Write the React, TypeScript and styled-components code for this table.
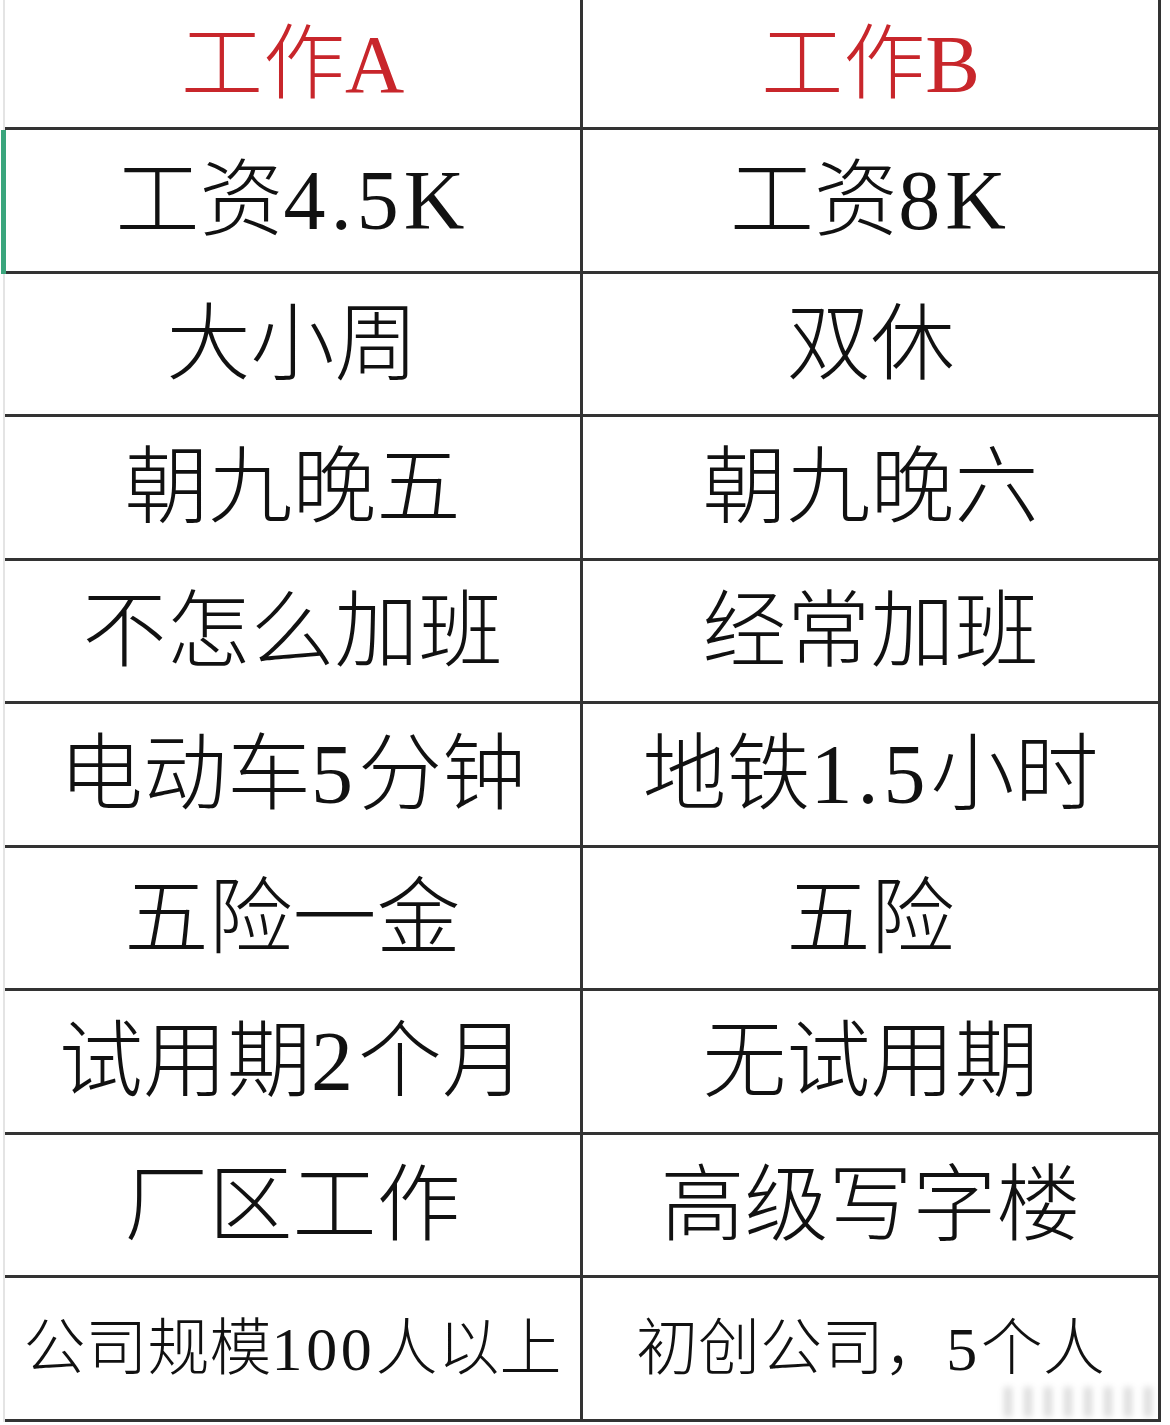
import styled, { createGlobalStyle } from "styled-components";

const GlobalStyle = createGlobalStyle`
  html, body {
    margin: 0;
    padding: 0;
    background: #fff;
  }
  body {
    width: 1170px;
    height: 1425px;
    overflow: hidden;
  }
`;

const Sheet = styled.div`
  position: relative;
  width: 1170px;
  height: 1425px;
  box-sizing: border-box;
  padding-left: 3px;
  background: #fff;
`;

const Table = styled.div`
  display: grid;
  grid-template-columns: 578px 578px;
  grid-template-rows: 130px repeat(9, 143.5px);
  width: max-content;
  border-left: 2px solid #e4e4e4;
`;

const Cell = styled.div<{ $head?: boolean; $small?: boolean; $selected?: boolean }>`
  position: relative;
  display: flex;
  align-items: center;
  justify-content: center;
  box-sizing: border-box;
  border-right: 3px solid #333;
  border-bottom: 3px solid #333;
  padding-top: 2px;
  font-family: "Liberation Serif", "Noto Sans CJK SC", serif;
  font-weight: 300;
  font-size: ${p => (p.$small ? 62 : p.$head ? 82 : 84)}px;
  color: ${p => (p.$head ? "#c8262b" : "#111")};
  white-space: nowrap;
  line-height: 1;

  ${p =>
    p.$selected &&
    `
    &::before {
      content: "";
      position: absolute;
      left: -4px;
      top: 0;
      bottom: -3px;
      width: 5px;
      background: #3aa57c;
    }
  `}
`;

const Latin = styled.span`
  letter-spacing: 0.06em;
`;

const Watermark = styled.div`
  position: absolute;
  right: 16px;
  bottom: 8px;
  width: 150px;
  height: 30px;
  opacity: 0.25;
  filter: blur(3px);
  background: repeating-linear-gradient(
    90deg,
    #777 0 8px,
    transparent 8px 20px
  );
`;

const rows: [string, string][] = [
  ["工资4.5K", "工资8K"],
  ["大小周", "双休"],
  ["朝九晚五", "朝九晚六"],
  ["不怎么加班", "经常加班"],
  ["电动车5分钟", "地铁1.5小时"],
  ["五险一金", "五险"],
  ["试用期2个月", "无试用期"],
  ["厂区工作", "高级写字楼"],
  ["公司规模100人以上", "初创公司，5个人"],
];

// split latin runs so they get the half-width spacing of the original sheet font
const render = (text: string) =>
  text.split(/([0-9A-Za-z.]+)/).map((part, i) =>
    /^[0-9A-Za-z.]+$/.test(part) ? <Latin key={i}>{part}</Latin> : part
  );

export default function App() {
  return (
    <>
      <GlobalStyle />
      <Sheet>
        <Table>
          <Cell $head>工作A</Cell>
          <Cell $head>工作B</Cell>
          {rows.map(([a, b], i) => {
            const small = i === rows.length - 1;
            return [
              <Cell key={`a${i}`} $small={small} $selected={i === 0}>{render(a)}</Cell>,
              <Cell key={`b${i}`} $small={small}>{render(b)}</Cell>,
            ];
          })}
        </Table>
        <Watermark />
      </Sheet>
    </>
  );
}
